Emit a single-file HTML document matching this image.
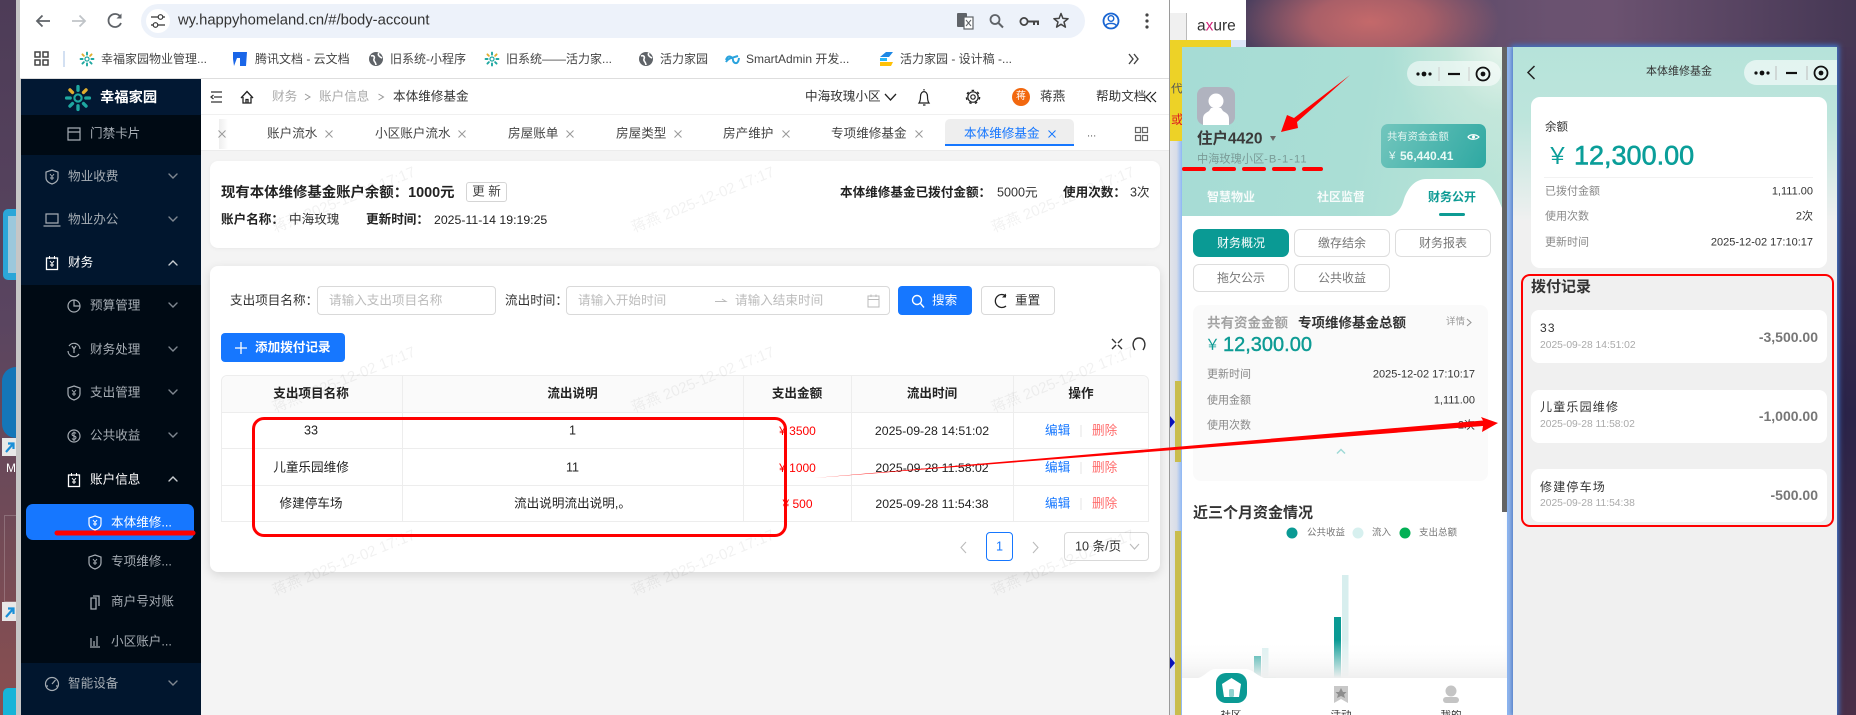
<!DOCTYPE html>
<html lang="zh"><head><meta charset="utf-8"><title>本体维修基金</title>
<style>
*{box-sizing:border-box;margin:0;padding:0}
html,body{width:1856px;height:715px;overflow:hidden;background:#4c3a5a}
body{font-family:"Liberation Sans","Noto Sans CJK SC",sans-serif;color:#222;font-size:12.6px}
#root{position:relative;width:1856px;height:715px;overflow:hidden}
.b{position:absolute}
.t,.c,.r{position:absolute;white-space:nowrap;line-height:1}
.t{transform:translateY(-50%)}
.c{transform:translate(-50%,-50%)}
.r{transform:translate(-100%,-50%)}
.g{color:#a6adb4}
.w{color:#fff}
.bold{font-weight:700}
.bm{font-size:12px;color:#444}
.tb{font-size:12.6px;color:#444}
.th{font-weight:700;color:#222;font-size:12.6px}
.d{font-size:12.3px;color:#222}
.p{color:#bbb}
.wm{position:absolute;white-space:nowrap;font-size:15px;line-height:1;color:rgba(0,0,0,.055);transform:translate(-50%,-50%) rotate(-22deg)}
.pb{position:absolute;border-radius:6px;border:1px solid #ddd;background:#fff;color:#777;font-size:12px;text-align:center;line-height:26px}
.lab{font-size:11px;color:#888}
.val{font-size:11px;color:#333}
.it{font-size:12px;letter-spacing:1.2px;color:#333}
.dt{font-size:10.3px;color:#aaa}
.am{font-size:14px;font-weight:700;color:#777}
.tl{position:absolute;top:710px;width:40px;height:5px;overflow:hidden;text-align:center;font-size:10.5px;line-height:11px;color:#333}
</style></head><body><div id="root">

<!-- desktop -->
<div class="b" style="left:0;top:0;width:16px;height:715px;background:linear-gradient(180deg,#4d3c57 0%,#5a4560 45%,#6e4a58 70%,#8a4f50 100%)"></div>
<div class="b" style="left:1246px;top:0;width:610px;height:47px;background:radial-gradient(ellipse 130px 60px at 124px 22px,#c4696a 0%,#a95f68 45%,rgba(100,78,108,0) 100%),linear-gradient(90deg,#4b3f5e 0%,#6a5270 50%,#6b5270 60%,#453754 100%)"></div>
<div class="b" style="left:1838px;top:47px;width:18px;height:668px;background:linear-gradient(180deg,#463655 0%,#2a2348 55%,#4a2f48 100%)"></div>

<!-- desktop icons left -->
<div class="b" style="left:3px;top:209px;width:13px;height:71px;background:#2ba6d8;border-radius:5px 0 0 5px"></div>
<div class="b" style="left:8px;top:216px;width:8px;height:57px;background:#9cc8dc"></div>
<div class="b" style="left:2px;top:367px;width:14px;height:71px;background:#1476b8;border-radius:14px 0 0 14px"></div>
<div class="b" style="left:2px;top:438px;width:14px;height:18px;background:#e8e8e8"></div>
<div class="t" style="left:6px;top:468px;color:#fff;font-size:12px">M</div>
<div class="b" style="left:4px;top:515px;width:12px;height:87px;border:1px solid rgba(255,255,255,.2);border-right:0"></div>
<div class="b" style="left:2px;top:602px;width:14px;height:19px;background:#e8e8e8"></div>
<div class="b" style="left:3px;top:688px;width:13px;height:27px;background:#16b4d8;border-radius:5px 0 0 0"></div>

<!-- browser window -->
<div class="b" style="left:16px;top:0;width:5px;height:715px;background:#c6c6c6"></div>
<div class="b" style="left:20px;top:0;width:1150px;height:79px;background:#fff;border-bottom:1px solid #dedede"></div>
<div class="b" style="left:141px;top:4px;width:944px;height:34px;border-radius:17px;background:#edf2fa"></div>
<div class="b" style="left:146px;top:9px;width:24px;height:24px;border-radius:12px;background:#fff"></div>
<div class="b" style="left:1169px;top:0;width:1px;height:715px;background:#9a9a9a"></div>

<!-- sidebar -->
<div class="b" style="left:21px;top:79px;width:180px;height:636px;background:#000a14"></div>
<div class="b" style="left:21px;top:79px;width:180px;height:36px;background:#021833"></div>
<div class="b" style="left:21px;top:155px;width:180px;height:130px;background:#01162e"></div>
<div class="b" style="left:21px;top:663px;width:180px;height:52px;background:#01162e"></div>
<div class="b" style="left:26px;top:504px;width:168px;height:36px;background:#1677ff;border-radius:7px"></div>

<!-- main -->
<div class="b" style="left:201px;top:79px;width:968px;height:36px;background:#fff;border-bottom:1px solid #f0f0f0"></div>
<div class="b" style="left:201px;top:115px;width:968px;height:36px;background:#fff;border-bottom:1px solid #ececec"></div>
<div class="b" style="left:201px;top:151px;width:968px;height:564px;background:#f4f4f4"></div>
<div class="b" style="left:219px;top:119px;width:9px;height:30px;background:linear-gradient(90deg,#eee,#fff)"></div>
<div class="b" style="left:945px;top:119px;width:129px;height:27px;background:#eee;border-radius:5px 5px 0 0;border-bottom:2px solid #1677ff"></div>
<div class="b" style="left:210px;top:161px;width:950px;height:87px;background:#fff;border-radius:8px;box-shadow:0 1px 4px rgba(0,0,0,.05)"></div>
<div class="b" style="left:210px;top:266px;width:950px;height:306px;background:#fff;border-radius:8px;box-shadow:0 3px 10px rgba(0,0,0,.12)"></div>
<div class="b" style="left:466px;top:182px;width:41px;height:20px;border:1px solid #d5d5d5;border-radius:3px"></div>
<div class="b" style="left:317px;top:286px;width:179px;height:29px;border:1px solid #d9d9d9;border-radius:4px"></div>
<div class="b" style="left:566px;top:286px;width:324px;height:29px;border:1px solid #d9d9d9;border-radius:4px"></div>
<div class="b" style="left:898px;top:286px;width:74px;height:29px;background:#1677ff;border-radius:4px"></div>
<div class="b" style="left:981px;top:286px;width:74px;height:29px;border:1px solid #d9d9d9;border-radius:4px;background:#fff"></div>
<div class="b" style="left:221px;top:333px;width:124px;height:29px;background:#1677ff;border-radius:4px"></div>

<!-- table -->
<div class="b" style="left:221px;top:375px;width:928px;height:147px;border:1px solid #ededed;border-radius:6px 6px 0 0"></div>
<div class="b" style="left:222px;top:376px;width:926px;height:36px;background:#fafafa;border-radius:6px 6px 0 0"></div>
<div class="b" style="left:221px;top:412px;width:928px;height:1px;background:#ededed"></div>
<div class="b" style="left:221px;top:448px;width:928px;height:1px;background:#ededed"></div>
<div class="b" style="left:221px;top:485px;width:928px;height:1px;background:#ededed"></div>
<div class="b" style="left:402px;top:375px;width:1px;height:147px;background:#ededed"></div>
<div class="b" style="left:743px;top:375px;width:1px;height:147px;background:#ededed"></div>
<div class="b" style="left:851px;top:375px;width:1px;height:147px;background:#ededed"></div>
<div class="b" style="left:1013px;top:375px;width:1px;height:147px;background:#ededed"></div>
<div class="b" style="left:986px;top:532px;width:27px;height:29px;border:1px solid #1677ff;border-radius:4px;background:#fff"></div>
<div class="b" style="left:1064px;top:532px;width:85px;height:29px;border:1px solid #d9d9d9;border-radius:4px"></div>

<!-- between windows -->
<div class="b" style="left:1170px;top:0;width:76px;height:13px;background:#fff"></div>
<div class="b" style="left:1170px;top:13px;width:76px;height:27px;background:#f0f0f0"></div>
<div class="b" style="left:1186px;top:13px;width:60px;height:27px;background:#fff;border-left:1px solid #bbb"></div>
<div class="b" style="left:1170px;top:40px;width:76px;height:8px;background:#dce6f8"></div>
<div class="b" style="left:1170px;top:40px;width:61px;height:101px;background:#edd227"></div>
<div class="b" style="left:1170px;top:141px;width:12px;height:574px;background:linear-gradient(90deg,#e2e4ea 0%,#d8dde8 55%,#8db7f5 100%)"></div>
<div class="b" style="left:1175px;top:381px;width:6px;height:81px;background:#c9bd4e"></div>
<div class="b" style="left:1175px;top:531px;width:6px;height:184px;background:#c9bd4e"></div>
<div class="t" style="left:1171px;top:90px;font-size:11.5px;color:#555">代</div>
<div class="t" style="left:1171px;top:120px;font-size:12.5px;color:#d22">或</div>

<!-- panel 1 -->
<div class="b" style="left:1182px;top:47px;width:325px;height:668px;background:#fff"></div>
<div class="b" style="left:1182px;top:47px;width:320px;height:169px;background:radial-gradient(ellipse 110px 130px at 100% 0%,#e6f4ec 0%,rgba(200,232,220,.7) 50%,rgba(170,222,212,0) 100%),linear-gradient(100deg,#a6dcd5 0%,#aaded5 55%,#bce5d8 100%)"></div>
<div class="b" style="left:1502px;top:47px;width:5px;height:465px;background:#646464"></div>
<div class="b" style="left:1507px;top:47px;width:6px;height:668px;background:linear-gradient(90deg,#8db7f5,#c9d6ea)"></div>
<div class="b" style="left:1407px;top:61px;width:94px;height:25px;border-radius:13px;background:rgba(255,255,255,.55)"></div>
<div class="b" style="left:1197px;top:87px;width:38px;height:38px;border-radius:8px;background:#b0b3bf"></div>
<div class="b" style="left:1381px;top:124px;width:105px;height:44px;border-radius:7px;background:linear-gradient(120deg,#72c6bd,#2ea8a2)"></div>
<div class="b" style="left:1193px;top:229px;width:96px;height:28px;border-radius:7px;background:#0a9a94"></div>
<div class="pb" style="left:1294px;top:229px;width:96px;height:28px">缴存结余</div>
<div class="pb" style="left:1395px;top:229px;width:96px;height:28px">财务报表</div>
<div class="pb" style="left:1193px;top:264px;width:96px;height:28px">拖欠公示</div>
<div class="pb" style="left:1294px;top:264px;width:96px;height:28px">公共收益</div>
<div class="b" style="left:1193px;top:305px;width:295px;height:176px;border-radius:8px;background:#fafafa"></div>

<!-- panel 2 -->
<div class="b" style="left:1513px;top:47px;width:324px;height:668px;background:linear-gradient(180deg,#b6e3da 0px,#bde5dc 70px,#f0f0f0 175px);box-shadow:0 0 5px 2px #3f73c8"></div>
<div class="b" style="left:1744px;top:60px;width:93px;height:25px;border-radius:13px 0 0 13px;background:rgba(255,255,255,.6)"></div>
<div class="b" style="left:1531px;top:97px;width:296px;height:171px;background:#fff;border-radius:9px"></div>
<div class="b" style="left:1544px;top:177px;width:269px;height:1px;background:#f2f2f2"></div>
<div class="b" style="left:1531px;top:310px;width:296px;height:53px;background:#fff;border-radius:8px"></div>
<div class="b" style="left:1531px;top:390px;width:296px;height:53px;background:#fff;border-radius:8px"></div>
<div class="b" style="left:1531px;top:469px;width:296px;height:53px;background:#fff;border-radius:8px"></div>

<!-- icons -->
<svg class="b" style="left:0;top:0" width="1856" height="715" viewBox="0 0 1856 715" fill="none">
<defs>
<path id="cd" d="M-4 -2 L0 2 L4 -2" stroke-width="1.4" stroke-linecap="round"/>
<path id="cu" d="M-4 2 L0 -2 L4 2" stroke-width="1.4" stroke-linecap="round"/>
<path id="x" d="M-3.5 -3.5 L3.5 3.5 M3.5 -3.5 L-3.5 3.5" stroke="#999" stroke-width="1"/>
<g id="shield"><path d="M0 -7 L6 -5 V1 C6 4 3 6 0 7 C-3 6 -6 4 -6 1 V-5 Z" stroke-width="1.2"/><path d="M-2 -3 L0 -.5 L2 -3 M0 -.5 V3 M-2 1 H2" stroke-width="1"/></g>
<g id="cal"><rect x="-5.5" y="-5" width="11" height="11.5" stroke-width="1.3"/><path d="M-2.5 -7 V-4 M2.5 -7 V-4 M-2 -2 L0 .5 L2 -2 M0 .5 V4 M-2 2 H2" stroke-width="1"/></g>
<g id="flower" stroke-linecap="round" stroke-width="2.8"><path d="M0 -6.5 V-9.5 M6.5 0 H9.5 M0 6.5 V9.5 M-6.5 0 H-9.5 M-4.6 4.6 L-6.7 6.7 M4.6 4.6 L6.7 6.7" stroke="#1ea7a0"/><path d="M-4.6 -4.6 L-6.7 -6.7 M4.6 -4.6 L6.7 -6.7" stroke="#e0ad2f"/><circle r="3" stroke="#1ea7a0" stroke-width="1.8"/></g>
<g id="globe"><circle r="7" fill="#5f6368"/><path d="M-5 -3 C-2 -4 -1 -2 -2 0 C-3 2 0 3 0 6 M3 -6 C1 -4 4 -2 6 -1" stroke="#fff" stroke-width="1.6"/></g>
<g id="wdots"><circle cx="-6" cy="0" r="1.6" fill="#111"/><circle cx="0" cy="0" r="2.4" fill="#111"/><circle cx="6" cy="0" r="1.6" fill="#111"/></g>
<g id="target"><circle r="6.5" stroke="#111" stroke-width="1.8"/><circle r="2.4" fill="#111"/></g>
<linearGradient id="fade" x1="0" y1="0" x2="0" y2="1"><stop offset="0" stop-color="#fff" stop-opacity="0"/><stop offset="1" stop-color="#efefef"/></linearGradient>
</defs>

<!-- desktop shortcut arrows -->
<path d="M6 452 L13 444 M8 443.5 H13.5 V449" stroke="#1a8fd8" stroke-width="2.2"/>
<path d="M6 617 L13 609 M8 608.5 H13.5 V614" stroke="#1a8fd8" stroke-width="2.2"/>

<!-- chrome -->
<path d="M50 21 H37 M42.5 15.5 L37 21 L42.5 26.5" stroke="#5f6368" stroke-width="1.8"/>
<path d="M85 21 H72 M79.5 15.5 L85 21 L79.5 26.5" stroke="#c0c4c8" stroke-width="1.8"/>
<path d="M120.5 17 A6.5 6.5 0 1 0 121 23" stroke="#5f6368" stroke-width="1.8"/><path d="M121.5 13.5 V18.5 H116.5 Z" fill="#5f6368"/>
<path d="M151 17 H158 M163 17 H165 M151 25 H153 M158 25 H165" stroke="#333" stroke-width="1.3"/><circle cx="160.5" cy="17" r="2.3" stroke="#333" stroke-width="1.2"/><circle cx="155.5" cy="25" r="2.3" stroke="#333" stroke-width="1.2"/>
<rect x="957" y="13" width="10" height="14" rx="1" fill="#5f6368"/><rect x="964" y="17" width="9" height="12" fill="#fff" stroke="#5f6368" stroke-width="1.2"/><path d="M966 20 L971 26 M971 20 L966 26" stroke="#5f6368"/>
<circle cx="995" cy="19.5" r="4.5" stroke="#5f6368" stroke-width="1.8"/><path d="M998.5 23 L1003 27.5" stroke="#5f6368" stroke-width="2"/>
<circle cx="1024" cy="21.5" r="3.6" stroke="#444" stroke-width="1.8"/><path d="M1028 21.5 H1038 V25 M1034 21.5 V25" stroke="#444" stroke-width="2"/>
<path d="M1061 13.5 L1062.9 18.4 L1068.1 18.7 L1064 22 L1065.4 27.1 L1061 24.2 L1056.6 27.1 L1058 22 L1053.9 18.7 L1059.1 18.4 Z" stroke="#444" stroke-width="1.5" stroke-linejoin="round"/>
<circle cx="1111" cy="21" r="7.5" stroke="#1a66d2" stroke-width="1.8"/><circle cx="1111" cy="18.5" r="2.8" stroke="#1a66d2" stroke-width="1.4"/><path d="M1105.5 26 C1107 22.5 1115 22.5 1116.5 26" stroke="#1a66d2" stroke-width="1.4"/>
<circle cx="1147" cy="15" r="1.6" fill="#444"/><circle cx="1147" cy="21" r="1.6" fill="#444"/><circle cx="1147" cy="27" r="1.6" fill="#444"/>
<g stroke="#444" stroke-width="1.5"><rect x="35" y="52" width="5" height="5"/><rect x="43" y="52" width="5" height="5"/><rect x="35" y="60" width="5" height="5"/><rect x="43" y="60" width="5" height="5"/></g>
<path d="M64 51 V67" stroke="#c4d6ee" stroke-width="1.5"/>
<use href="#flower" transform="translate(87,59) scale(.68)"/>
<path d="M233 52 L247 52 L246 66 H240 L240 58 H237 L234 66 L233 59 Z" fill="#1a66e8"/>
<use href="#globe" transform="translate(376,59)"/>
<use href="#flower" transform="translate(492,59) scale(.68)"/>
<use href="#globe" transform="translate(646,59)"/>
<path d="M726 60 C728 54 733 57 733 60 C733 63 738 66 739 58 M726 62 C728 58 732 58 738 56" stroke="#2aa3dd" stroke-width="2"/>
<path d="M880 57 L886 52 H893 L889 57 Z" fill="#1e88e5"/><path d="M880 58 H887 V61 H880 Z" fill="#29b6f6"/><path d="M880 62 H893 L891 66 H880 Z" fill="#ffc107"/>
<path d="M1129 54 L1133 59 L1129 64 M1134 54 L1138 59 L1134 64" stroke="#444" stroke-width="1.4"/>

<!-- sidebar -->
<use href="#flower" transform="translate(78,98) scale(1.2)"/>
<g stroke="#a6adb4">
<path d="M68 128 H80 V140 H68 Z M68 132 H80" stroke-width="1.2"/>
<use href="#shield" transform="translate(52,177)"/>
<path d="M46 214 H58 V223 H46 Z M43.5 226 H60.5" stroke-width="1.2"/>
<circle cx="74" cy="306" r="6" stroke-width="1.2"/><path d="M74 300 V306 H80" stroke-width="1.2"/>
<path d="M69 346 A6 6 0 0 1 80 349 M79 354 A6 6 0 0 1 68 351 M72 346 L74 349 L76 346 M74 349 V353" stroke-width="1.2"/>
<use href="#shield" transform="translate(74,393)"/>
<circle cx="74" cy="436" r="6" stroke-width="1.2"/><path d="M76 433.5 C75 432 72 432.5 72 434.5 C72 436.5 76 435.5 76 437.5 C76 439.5 73 440 72 438.5 M74 431.5 V441" stroke-width="1"/>
<use href="#shield" transform="translate(95,562)"/>
<path d="M93 596 H99 V606 M91 598 H96 V609 H91 Z" stroke-width="1.3"/>
<path d="M90 647 H100 M91 638 V646 M94 641 V646 M97 636 V646" stroke-width="1.2"/>
<circle cx="52" cy="684" r="6.5" stroke-width="1.2"/><path d="M52 684 L55.5 680 M46.5 686 H48 M56 686 H57.5" stroke-width="1.2"/>
</g>
<g stroke="#7f8790">
<use href="#cd" transform="translate(173,176)"/><use href="#cd" transform="translate(173,219)"/><use href="#cd" transform="translate(173,305)"/><use href="#cd" transform="translate(173,349)"/><use href="#cd" transform="translate(173,392)"/><use href="#cd" transform="translate(173,435)"/><use href="#cd" transform="translate(173,683)"/>
</g>
<g stroke="#fff">
<use href="#cal" transform="translate(52,263)"/><use href="#cal" transform="translate(74,480)"/>
<use href="#shield" transform="translate(95,523)"/>
</g>
<g stroke="#c8ccd0">
<use href="#cu" transform="translate(173,263)"/><use href="#cu" transform="translate(173,479)"/>
</g>

<!-- header icons -->
<path d="M211 92 H222 M214 97 H222 M211 102 H222 M213.5 95 L211 97 L213.5 99" stroke="#333" stroke-width="1.2"/>
<path d="M241 98 L247 91.5 L253 98 M243 97 V103 H251 V97 M246 103 V99.5 H248 V103" stroke="#222" stroke-width="1.3"/>
<path d="M305 94 L310 97 L305 100 M378.5 94 L383.5 97 L378.5 100" stroke="#999" stroke-width="1"/>
<path d="M885 94 L890.5 100 L896 94" stroke="#222" stroke-width="1.3"/>
<path d="M919 103 H929 C927.5 101 927.5 99 927.5 96.5 C927.5 90 920.5 90 920.5 96.5 C920.5 99 920.5 101 919 103 Z M923 105 H925.5 M924 89 V90.5" stroke="#222" stroke-width="1.2"/>
<circle cx="973" cy="97" r="5.2" stroke="#222" stroke-width="1.2"/><circle cx="973" cy="97" r="6.6" stroke="#222" stroke-width="1.4" stroke-dasharray="2.5 3.4"/><circle cx="973" cy="97" r="2.2" stroke="#222" stroke-width="1.2"/>
<circle cx="1021" cy="97" r="9" fill="#f2680f"/>
<path d="M1157 92 L1152 97 L1157 102 M1162 92 L1157 97 L1162 102" stroke="#222" stroke-width="1.2" transform="translate(-6,0)"/>

<!-- tabs -->
<use href="#x" transform="translate(222,134)"/><use href="#x" transform="translate(329,134)"/><use href="#x" transform="translate(462,134)"/><use href="#x" transform="translate(570,134)"/><use href="#x" transform="translate(678,134)"/><use href="#x" transform="translate(786,134)"/><use href="#x" transform="translate(919,134)"/>
<path d="M1048.5 130.5 L1055.5 137.5 M1055.5 130.5 L1048.5 137.5" stroke="#1677ff" stroke-width="1"/>
<g stroke="#666" stroke-width="1.2"><rect x="1135.5" y="127.5" width="5" height="5"/><rect x="1142.5" y="127.5" width="5" height="5"/><rect x="1135.5" y="135.5" width="5" height="5"/><rect x="1142.5" y="135.5" width="5" height="5"/></g>

<!-- filter icons -->
<path d="M715 301.5 H726 L722 299" stroke="#bbb" stroke-width="1"/>
<path d="M868 296 H879 V307 H868 Z M868 299.5 H879 M871 294.5 V297 M876 294.5 V297" stroke="#bbb" stroke-width="1"/>
<circle cx="917" cy="300" r="4.5" stroke="#fff" stroke-width="1.4"/><path d="M920.5 303.5 L924 307.5" stroke="#fff" stroke-width="1.4"/>
<path d="M1006 296 A6.5 6.5 0 1 0 1006 306" stroke="#222" stroke-width="1.3"/><path d="M1006 293.5 V297.5 H1002" fill="#222"/>
<path d="M241 342 V354 M235 348 H247" stroke="#fff" stroke-width="1.3"/>
<path d="M1112 339 L1116 343 M1122 339 L1118 343 M1112 349 L1116 345 M1122 349 L1118 345" stroke="#333" stroke-width="1.4"/>
<path d="M1135 350 C1131 344 1134 338 1139 338 C1144 338 1147 344 1143 350" stroke="#333" stroke-width="1.4"/>
<path d="M1081 425 V437 M1081 462 V474 M1081 498 V510" stroke="#e6e6e6"/>
<path d="M966 542 L961 547.5 L966 553" stroke="#bbb" stroke-width="1.1"/>
<path d="M1033 542 L1038 547.5 L1033 553" stroke="#bbb" stroke-width="1.1"/>
<path d="M1130 544 L1134.5 549 L1139 544" stroke="#bbb" stroke-width="1.1"/>

<!-- panel 1 icons -->
<use href="#wdots" transform="translate(1424,74)"/><path d="M1439 67 V81 M1469 67 V81" stroke="#ccc"/><path d="M1448 74 H1460" stroke="#111" stroke-width="2.2"/><use href="#target" transform="translate(1483,74)"/>
<circle cx="1216" cy="101" r="7.5" fill="#fff"/><path d="M1211 108 L1209 111 C1206 113 1203 114 1203 119 V125 H1229 V119 C1229 114 1226 113 1223 111 L1221 108 Z" fill="#fff"/>
<path d="M1270 136 H1276 L1273 141 Z" fill="#666"/>
<path d="M1468 137 C1470 134 1476 134 1479 137 C1476 140 1470 140 1468 137 Z" stroke="#fff" stroke-width="1.2"/><circle cx="1473.5" cy="137" r="1.5" fill="#fff"/>
<path d="M1390 216 C1398 214 1402 207 1404 199 C1408 187 1416 179 1426 179 H1478 C1490 179 1497 195 1502 208 V216 Z" fill="#fff"/>
<rect x="1439" y="213" width="26" height="3" rx="1.5" fill="#0d9b94"/>
<path d="M1467 319 L1471 322.5 L1467 326" stroke="#999" stroke-width="1.1"/>
<path d="M1337 453.5 L1341 449.5 L1345 453.5" stroke="#9fd9d6" stroke-width="1.5"/>
<circle cx="1292" cy="533" r="5.5" fill="#0a9a94"/><circle cx="1358" cy="533" r="5.5" fill="#d7f0ef"/><circle cx="1405" cy="533" r="5.5" fill="#03b055"/>
<rect x="1254" y="656" width="7" height="30" fill="#0a9a94"/><rect x="1262" y="648" width="6.5" height="38" fill="#d7eeee"/>
<rect x="1334" y="617" width="7" height="70" fill="#0a9a94"/><rect x="1342" y="575" width="6.5" height="112" fill="#d7eeee"/>
<rect x="1262" y="677" width="14" height="3" fill="#03b055"/>
<rect x="1182" y="640" width="325" height="38" fill="url(#fade)"/>
<rect x="1182" y="678" width="325" height="37" fill="#fff"/>
<path d="M1198 678 C1206 676 1208 669 1216 669 H1246 C1252 669 1256 675 1264 678 Z" fill="#fff"/>
<rect x="1216" y="673" width="31" height="30" rx="10" fill="#0a9a94"/>
<path d="M1231.5 678 L1241 684 L1239 697 H1224 L1222 684 Z" fill="#fff"/><rect x="1229" y="689" width="5" height="8" rx="1.5" fill="#8fd3cf"/>
<path d="M1334 686 H1348 V703 L1341 699 L1334 703 Z" fill="#c8c8c8"/><path d="M1341 688 L1343 692 H1346.5 L1344 694.5 L1345 698 L1341 696 L1337 698 L1338 694.5 L1335.5 692 H1339 Z" fill="#8d8d8d"/>
<circle cx="1451" cy="691" r="5.5" fill="#c4c4c4"/><rect x="1443" y="697" width="16" height="6" rx="3" fill="#c4c4c4"/>

<!-- panel 2 icons -->
<path d="M1534.5 66 L1528 72.5 L1534.5 79" stroke="#222" stroke-width="1.5"/>
<use href="#wdots" transform="translate(1762,73)"/><path d="M1776 66 V80 M1807 66 V80" stroke="#bbb"/><path d="M1786 73 H1797" stroke="#111" stroke-width="2.2"/><use href="#target" transform="translate(1821,73)"/>

<path d="M1170 416 L1175 422 L1170 428 Z M1170 657 L1175 663 L1170 669 Z" fill="#0a12b8"/>
</svg>

<!-- chrome text -->
<div class="t" style="left:178px;top:21px;font-size:14.8px;color:#333">wy.happyhomeland.cn/#/body-account</div>
<div class="t bm" style="left:101px;top:59px">幸福家园物业管理...</div>
<div class="t bm" style="left:255px;top:59px">腾讯文档 - 云文档</div>
<div class="t bm" style="left:390px;top:59px">旧系统-小程序</div>
<div class="t bm" style="left:506px;top:59px">旧系统——活力家...</div>
<div class="t bm" style="left:660px;top:59px">活力家园</div>
<div class="t bm" style="left:746px;top:59px">SmartAdmin 开发...</div>
<div class="t bm" style="left:900px;top:59px">活力家园 - 设计稿 -...</div>

<!-- sidebar text -->
<div class="t w bold" style="left:100px;top:98px;font-size:14.3px">幸福家园</div>
<div class="t g" style="left:90px;top:134px">门禁卡片</div>
<div class="t g" style="left:68px;top:177px">物业收费</div>
<div class="t g" style="left:68px;top:220px">物业办公</div>
<div class="t w" style="left:68px;top:263px">财务</div>
<div class="t g" style="left:90px;top:306px">预算管理</div>
<div class="t g" style="left:90px;top:350px">财务处理</div>
<div class="t g" style="left:90px;top:393px">支出管理</div>
<div class="t g" style="left:90px;top:436px">公共收益</div>
<div class="t w" style="left:90px;top:480px">账户信息</div>
<div class="t w" style="left:111px;top:523px">本体维修...</div>
<div class="t g" style="left:111px;top:562px">专项维修...</div>
<div class="t g" style="left:111px;top:602px">商户号对账</div>
<div class="t g" style="left:111px;top:642px">小区账户...</div>
<div class="t g" style="left:68px;top:684px">智能设备</div>

<!-- header text -->
<div class="t" style="left:272px;top:97px;color:#aaa">财务</div>
<div class="t" style="left:319px;top:97px;color:#aaa">账户信息</div>
<div class="t" style="left:393px;top:97px;color:#333">本体维修基金</div>
<div class="t" style="left:805px;top:97px;color:#333;font-size:12.6px">中海玫瑰小区</div>
<div class="c w" style="left:1021px;top:97px;font-size:10px">蒋</div>
<div class="t" style="left:1040px;top:97px;color:#333">蒋燕</div>
<div class="t" style="left:1096px;top:97px;color:#333">帮助文档</div>

<!-- tab text -->
<div class="t tb" style="left:267px;top:134px">账户流水</div>
<div class="t tb" style="left:375px;top:134px">小区账户流水</div>
<div class="t tb" style="left:508px;top:134px">房屋账单</div>
<div class="t tb" style="left:616px;top:134px">房屋类型</div>
<div class="t tb" style="left:723px;top:134px">房产维护</div>
<div class="t tb" style="left:831px;top:134px">专项维修基金</div>
<div class="t tb" style="left:964px;top:134px;color:#1677ff">本体维修基金</div>
<div class="t" style="left:1087px;top:134px;color:#666;font-size:11px">...</div>

<!-- card 1 -->
<div class="t bold" style="left:221px;top:193px;font-size:14.4px;color:#222">现有本体维修基金账户余额：1000元</div>
<div class="c" style="left:486.5px;top:192px;color:#444">更 新</div>
<div class="t bold" style="left:221px;top:220px;color:#222">账户名称：</div>
<div class="t" style="left:289px;top:220px;color:#333">中海玫瑰</div>
<div class="t bold" style="left:366px;top:220px;color:#222">更新时间：</div>
<div class="t d" style="left:434px;top:220px">2025-11-14 19:19:25</div>
<div class="t bold" style="left:840px;top:193px;color:#222">本体维修基金已拨付金额：</div>
<div class="t" style="left:997px;top:193px;color:#333">5000元</div>
<div class="t bold" style="left:1063px;top:193px;color:#222">使用次数：</div>
<div class="t" style="left:1130px;top:193px;color:#333">3次</div>

<!-- filter -->
<div class="t" style="left:230px;top:301px;color:#333">支出项目名称：</div>
<div class="t p" style="left:329px;top:301px">请输入支出项目名称</div>
<div class="t" style="left:505px;top:301px;color:#333">流出时间：</div>
<div class="t p" style="left:578px;top:301px">请输入开始时间</div>
<div class="t p" style="left:735px;top:301px">请输入结束时间</div>
<div class="t w" style="left:932px;top:301px">搜索</div>
<div class="t" style="left:1015px;top:301px;color:#333">重置</div>
<div class="t w" style="left:255px;top:347.5px;font-weight:700">添加拨付记录</div>

<!-- table text -->
<div class="c th" style="left:311px;top:394px">支出项目名称</div>
<div class="c th" style="left:572.5px;top:394px">流出说明</div>
<div class="c th" style="left:797px;top:394px">支出金额</div>
<div class="c th" style="left:932px;top:394px">流出时间</div>
<div class="c th" style="left:1081px;top:394px">操作</div>

<div class="c" style="left:311px;top:431px">33</div>
<div class="c" style="left:572.5px;top:431px">1</div>
<div class="c" style="left:797.5px;top:431px;color:#f00;font-size:12px">¥&nbsp;3500</div>
<div class="c d" style="left:932px;top:431px">2025-09-28 14:51:02</div>
<div class="t" style="left:1045px;top:431px;color:#1677ff">编辑</div>
<div class="t" style="left:1092px;top:431px;color:#ff6b6b">删除</div>

<div class="c" style="left:311px;top:468px">儿童乐园维修</div>
<div class="c" style="left:572.5px;top:468px">11</div>
<div class="c" style="left:797.5px;top:468px;color:#f00;font-size:12px">¥&nbsp;1000</div>
<div class="c d" style="left:932px;top:468px">2025-09-28 11:58:02</div>
<div class="t" style="left:1045px;top:468px;color:#1677ff">编辑</div>
<div class="t" style="left:1092px;top:468px;color:#ff6b6b">删除</div>

<div class="c" style="left:311px;top:504px">修建停车场</div>
<div class="c" style="left:572.5px;top:504px">流出说明流出说明,。</div>
<div class="c" style="left:797.5px;top:504px;color:#f00;font-size:12px">¥&nbsp;500</div>
<div class="c d" style="left:932px;top:504px">2025-09-28 11:54:38</div>
<div class="t" style="left:1045px;top:504px;color:#1677ff">编辑</div>
<div class="t" style="left:1092px;top:504px;color:#ff6b6b">删除</div>

<div class="c" style="left:999.5px;top:547px;color:#1677ff">1</div>
<div class="t" style="left:1075px;top:547px;color:#333">10 条/页</div>

<!-- axure text -->
<div class="t" style="left:1197px;top:26px;font-size:15.5px;color:#333">a<span style="color:#d4237a">x</span>ure</div>

<!-- panel 1 text -->
<div class="t bold" style="left:1197px;top:139px;font-size:15.5px;color:#3a3a3a">住户4420</div>
<div class="t" style="left:1197px;top:160px;font-size:11.2px;color:#7b9c98">中海玫瑰小区<span style="letter-spacing:1px">-B-1-11</span></div>
<div class="t" style="left:1387px;top:138px;font-size:10.3px;color:#e6f6f2">共有资金金额</div>
<div class="t" style="left:1387px;top:156px;font-size:10.5px;color:#eafaf6">￥</div>
<div class="t bold" style="left:1400px;top:156px;font-size:12px;color:#eafaf6">56,440.41</div>
<div class="c w bold" style="left:1231px;top:197px;font-size:12px;opacity:.9">智慧物业</div>
<div class="c w bold" style="left:1341px;top:197px;font-size:12px;opacity:.9">社区监督</div>
<div class="c bold" style="left:1452px;top:197px;font-size:12px;color:#0d9b94">财务公开</div>
<div class="c w" style="left:1241px;top:243px;font-size:12px">财务概况</div>
<div class="t bold" style="left:1207px;top:323px;font-size:13.5px;color:#a3a3a3">共有资金金额</div>
<div class="t bold" style="left:1298px;top:323px;font-size:13.5px;color:#333">专项维修基金总额</div>
<div class="t" style="left:1446px;top:322px;font-size:9.5px;color:#999">详情</div>
<div class="t" style="left:1205px;top:345px;font-size:15px;color:#0d9b94">￥</div>
<div class="t" style="left:1223px;top:345px;font-size:20px;color:#0d9b94;-webkit-text-stroke:.4px #0d9b94">12,300.00</div>
<div class="t lab" style="left:1207px;top:375px">更新时间</div>
<div class="r val" style="left:1475px;top:375px">2025-12-02 17:10:17</div>
<div class="t lab" style="left:1207px;top:401px">使用金额</div>
<div class="r val" style="left:1475px;top:401px">1,111.00</div>
<div class="t lab" style="left:1207px;top:426px">使用次数</div>
<div class="r val" style="left:1475px;top:426px">2次</div>
<div class="t bold" style="left:1193px;top:513px;font-size:15px;color:#333">近三个月资金情况</div>
<div class="t" style="left:1307px;top:533px;font-size:9.5px;color:#777">公共收益</div>
<div class="t" style="left:1372px;top:533px;font-size:9.5px;color:#777">流入</div>
<div class="t" style="left:1419px;top:533px;font-size:9.5px;color:#777">支出总额</div>
<div class="tl" style="left:1211px">社区</div>
<div class="tl" style="left:1321px">活动</div>
<div class="tl" style="left:1431px">我的</div>

<!-- panel 2 text -->
<div class="c" style="left:1679px;top:72px;font-size:11px;color:#333">本体维修基金</div>
<div class="t" style="left:1545px;top:128px;font-size:11.5px;color:#333">余额</div>
<div class="t" style="left:1546px;top:156px;font-size:23px;color:#0a9e99">￥</div>
<div class="t" style="left:1574px;top:156px;font-size:27px;color:#0a9e99;-webkit-text-stroke:.6px #0a9e99">12,300.00</div>
<div class="t lab" style="left:1545px;top:192px">已拨付金额</div>
<div class="r val" style="left:1813px;top:192px">1,111.00</div>
<div class="t lab" style="left:1545px;top:217px">使用次数</div>
<div class="r val" style="left:1813px;top:217px">2次</div>
<div class="t lab" style="left:1545px;top:243px">更新时间</div>
<div class="r val" style="left:1813px;top:243px">2025-12-02 17:10:17</div>
<div class="t bold" style="left:1531px;top:287px;font-size:15px;color:#333">拨付记录</div>
<div class="t it" style="left:1540px;top:328px">33</div>
<div class="t dt" style="left:1540px;top:346px">2025-09-28 14:51:02</div>
<div class="r am" style="left:1818px;top:337px">-3,500.00</div>
<div class="t it" style="left:1540px;top:407px">儿童乐园维修</div>
<div class="t dt" style="left:1540px;top:425px">2025-09-28 11:58:02</div>
<div class="r am" style="left:1818px;top:416px">-1,000.00</div>
<div class="t it" style="left:1540px;top:487px">修建停车场</div>
<div class="t dt" style="left:1540px;top:504px">2025-09-28 11:54:38</div>
<div class="r am" style="left:1818px;top:495px">-500.00</div>

<!-- watermarks -->
<div class="wm" style="left:344px;top:200px">蒋燕 2025-12-02 17:17</div>
<div class="wm" style="left:703px;top:200px">蒋燕 2025-12-02 17:17</div>
<div class="wm" style="left:1063px;top:200px">蒋燕 2025-12-02 17:17</div>
<div class="wm" style="left:344px;top:380px">蒋燕 2025-12-02 17:17</div>
<div class="wm" style="left:703px;top:380px">蒋燕 2025-12-02 17:17</div>
<div class="wm" style="left:1063px;top:380px">蒋燕 2025-12-02 17:17</div>
<div class="wm" style="left:344px;top:563px">蒋燕 2025-12-02 17:17</div>
<div class="wm" style="left:703px;top:563px">蒋燕 2025-12-02 17:17</div>
<div class="wm" style="left:1063px;top:563px">蒋燕 2025-12-02 17:17</div>

<!-- red annotations -->
<div class="b" style="left:252px;top:417px;width:535px;height:120px;border:3px solid #f00;border-radius:12px"></div>
<div class="b" style="left:1521px;top:274px;width:313px;height:253px;border:2px solid #f00;border-radius:9px"></div>
<svg class="b" style="left:0;top:0" width="1856" height="715" viewBox="0 0 1856 715" fill="none">
<path d="M57 533 H193" stroke="#f00" stroke-width="5" stroke-linecap="round"/>
<path d="M1184 169 H1204 M1214 169 H1234 M1244 169 H1264 M1274 169 H1294 M1304 169 H1321" stroke="#f00" stroke-width="4" stroke-linecap="round"/>
<polygon points="1350,75 1294,118 1287,115 1281,132 1298,128 1297,122" fill="#f00"/>
<polygon points="814,478 1483,420.5 1481,417 1498,423 1482,432 1483,426" fill="#f00"/>
</svg>
</div></body></html>
